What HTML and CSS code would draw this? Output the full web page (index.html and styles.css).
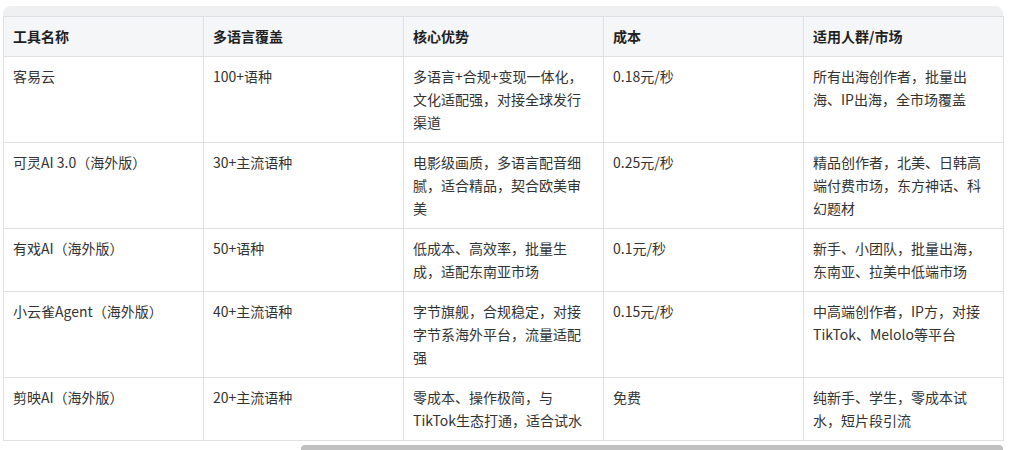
FILE: index.html
```html
<!DOCTYPE html>
<html lang="zh-CN">
<head>
<meta charset="utf-8">
<title>工具对比</title>
<link rel="stylesheet" href="styles.css">
</head>
<body>
<div class="wrap">
  <table class="grid">
    <colgroup>
      <col class="c"><col class="c"><col class="c"><col class="c"><col class="c">
    </colgroup>
    <thead>
      <tr>
        <th>工具名称</th>
        <th>多语言覆盖</th>
        <th>核心优势</th>
        <th>成本</th>
        <th>适用人群/市场</th>
      </tr>
    </thead>
    <tbody>
      <tr>
        <td>客易云</td>
        <td>100+语种</td>
        <td>多语言+合规+变现一体化，文化适配强，对接全球发行渠道</td>
        <td>0.18元/秒</td>
        <td>所有出海创作者，批量出海、IP出海，全市场覆盖</td>
      </tr>
      <tr>
        <td>可灵AI 3.0（海外版）</td>
        <td>30+主流语种</td>
        <td>电影级画质，多语言配音细腻，适合精品，契合欧美审美</td>
        <td>0.25元/秒</td>
        <td>精品创作者，北美、日韩高端付费市场，东方神话、科幻题材</td>
      </tr>
      <tr>
        <td>有戏AI（海外版）</td>
        <td>50+语种</td>
        <td>低成本、高效率，批量生成，适配东南亚市场</td>
        <td>0.1元/秒</td>
        <td>新手、小团队，批量出海，东南亚、拉美中低端市场</td>
      </tr>
      <tr>
        <td>小云雀Agent（海外版）</td>
        <td>40+主流语种</td>
        <td>字节旗舰，合规稳定，对接字节系海外平台，流量适配强</td>
        <td>0.15元/秒</td>
        <td>中高端创作者，IP方，对接TikTok、Melolo等平台</td>
      </tr>
      <tr>
        <td>剪映AI（海外版）</td>
        <td>20+主流语种</td>
        <td>零成本、操作极简，与TikTok生态打通，适合试水</td>
        <td>免费</td>
        <td>纯新手、学生，零成本试水，短片段引流</td>
      </tr>
    </tbody>
  </table>
</div>
<div class="scrollbar"><div class="thumb"></div></div>
</body>
</html>
```

FILE: styles.css
```css
html, body {
  margin: 0;
  padding: 0;
  background: #ffffff;
}
body {
  font-family: "Noto Sans CJK SC", "Noto Sans", sans-serif;
  font-size: 14px;
  color: #333333;
}
.wrap {
  width: 1000px;
  margin: 6px 0 0 3px;
  padding-top: 10px;
  background: #eff0f1;
  border-radius: 8px 8px 0 0;
}
.grid {
  width: 1000px;
  border-collapse: collapse;
  table-layout: fixed;
  background: #ffffff;
}
.grid .c {
  width: 200px;
}
.grid th,
.grid td {
  border: 1px solid #dee0e3;
  padding: 8px 9px;
  line-height: 23px;
  text-align: left;
  vertical-align: top;
}
.grid th {
  background: #f5f6f7;
  font-weight: 700;
  color: #1f1f1f;
}
.scrollbar {
  margin-top: 4px;
  height: 8px;
  width: 1010px;
}
.thumb {
  margin-left: 301px;
  width: 702px;
  height: 8px;
  background: #c1c1c1;
  border-radius: 4px 4px 0 0;
}
```
